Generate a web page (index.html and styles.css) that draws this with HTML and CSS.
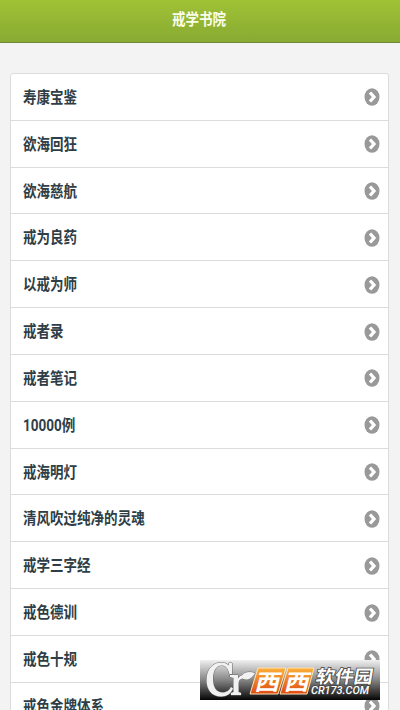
FILE: index.html
```html
<!DOCTYPE html>
<html lang="zh-CN">
<head>
<meta charset="utf-8">
<title>戒学书院</title>
<link rel="stylesheet" href="styles.css">
</head>
<body>
<svg width="0" height="0" class="defs">
  <symbol id="go" viewBox="0 0 16 18">
    <ellipse cx="8" cy="9" rx="7.500" ry="8.800" fill="#999"/>
    <path d="M6 4.500 L10 9 L6 13.500" fill="none" stroke="#fff" stroke-width="3.300"/>
  </symbol>
</svg>
<header class="bar"><h1>戒学书院</h1></header>
<main>
  <ul class="list">
    <li><span>寿康宝鉴</span><svg class="go"><use href="#go"/></svg></li>
    <li><span>欲海回狂</span><svg class="go"><use href="#go"/></svg></li>
    <li><span>欲海慈航</span><svg class="go"><use href="#go"/></svg></li>
    <li><span>戒为良药</span><svg class="go"><use href="#go"/></svg></li>
    <li><span>以戒为师</span><svg class="go"><use href="#go"/></svg></li>
    <li><span>戒者录</span><svg class="go"><use href="#go"/></svg></li>
    <li><span>戒者笔记</span><svg class="go"><use href="#go"/></svg></li>
    <li><span>10000例</span><svg class="go"><use href="#go"/></svg></li>
    <li><span>戒海明灯</span><svg class="go"><use href="#go"/></svg></li>
    <li><span>清风吹过纯净的灵魂</span><svg class="go"><use href="#go"/></svg></li>
    <li><span>戒学三字经</span><svg class="go"><use href="#go"/></svg></li>
    <li><span>戒色德训</span><svg class="go"><use href="#go"/></svg></li>
    <li><span>戒色十规</span><svg class="go"><use href="#go"/></svg></li>
    <li><span>戒色金牌体系</span><svg class="go"><use href="#go"/></svg></li>
  </ul>
</main>
<svg class="mark" viewBox="0 0 180 40">
  <defs>
    <linearGradient id="back" x1="0" y1="0" x2="0" y2="1"><stop offset="0" stop-color="#f0f0f0"/><stop offset=".5" stop-color="#858585"/><stop offset="1" stop-color="#050505"/></linearGradient>
    <linearGradient id="fire" x1="0" y1="0" x2="0" y2="1"><stop offset="0" stop-color="#fbb13a"/><stop offset="1" stop-color="#e04a12"/></linearGradient>
  </defs>
  <rect width="180" height="40" fill="url(#back)"/>
  <path class="cr" d="M29 3 H32 V14 H29.500 C28 8 25.500 5.500 21.500 5.500 C16 5.500 13 11 13 19 C13 27.500 16.500 32.500 22.500 32.500 C27 32.500 29.500 30 31 27 L33 28.500 C31 33.500 27 36.500 21 36.500 C12 36.500 6.500 30 6.500 20 C6.500 9.500 13 2.500 21 2.500 C25 2.500 27.500 4 28.500 5.500Z"/>
  <path class="cr" d="M30 15 H38 V18.500 C39.500 16 41 15.500 42 15.500 C45 11.500 50 11.500 55 13 C51 20 46 20.500 42.500 18.500 C39.500 19 38.500 21 38.500 24 V32 L41 33 V35 H31 V33 L33.500 32 V18 L30 17Z"/>
  <path d="M58 8 H86 L78 34 H50Z M88 8 H114 L107 34 H80Z" fill="url(#fire)" stroke="#ffe4b8" stroke-width="1"/>
  <g class="xi">
    <text transform="translate(54 29.500) skewX(-14)" textLength="25" lengthAdjust="spacingAndGlyphs">西</text>
    <text transform="translate(83.500 29.500) skewX(-14)" textLength="25" lengthAdjust="spacingAndGlyphs">西</text>
  </g>
  <text class="soft" transform="translate(115 22.500) skewX(-10)" textLength="57" lengthAdjust="spacingAndGlyphs">软件园</text>
  <text class="site" x="111" y="34" textLength="58" lengthAdjust="spacingAndGlyphs">CR173.COM</text>
</svg>
</body>
</html>
```

FILE: styles.css
```css
* { box-sizing: border-box; }
html, body { height: 710px; overflow: hidden; }
body {
  margin: 0;
  background: #f3f3f3;
  color: #2f3e46;
  font-family: Roboto, "Noto Sans CJK SC", sans-serif;
  font-weight: 700;
}
.defs { display: block; height: 0; }
.bar {
  height: 43px;
  background: linear-gradient(#a0c236, #88aa32);
  border-bottom: 1px solid #71883a;
  display: flex;
  justify-content: center;
}
.bar h1 {
  margin: 0 1px 0 0;
  font-size: 16px;
  line-height: 40px;
  color: #fbfde8;
  transform: scaleX(.845);
}
main { padding: 30px 11px 0 10px; }
.list {
  list-style: none;
  margin: 0;
  padding: 0;
  background: #fff;
  border: 1px solid #dcdcdc;
  border-radius: 3px 3px 0 0;
}
.list li {
  height: 46.83px;
  padding: 1px 8px 0 12px;
  border-bottom: 1px solid #dcdcdc;
  display: flex;
  align-items: center;
  justify-content: space-between;
}
.list span {
  padding-top: 1px;
  font-size: 16px;
  line-height: 24px;
  white-space: nowrap;
  transform: scaleX(.845);
  transform-origin: left center;
}
.go { width: 16px; height: 18px; }
.mark {
  position: absolute;
  left: 200px;
  top: 660px;
  width: 180px;
  height: 40px;
}
.cr { fill: #f1f1f1; stroke: #666; stroke-width: 1px; paint-order: stroke; }
.xi text { font-size: 22px; font-weight: 700; fill: #fff; }
.soft, .site { fill: #fff; stroke: #444; stroke-width: 1.5px; paint-order: stroke; }
.soft { font-size: 18px; font-weight: 700; }
.site { font-size: 10px; font-style: italic; font-weight: 500; }
```
